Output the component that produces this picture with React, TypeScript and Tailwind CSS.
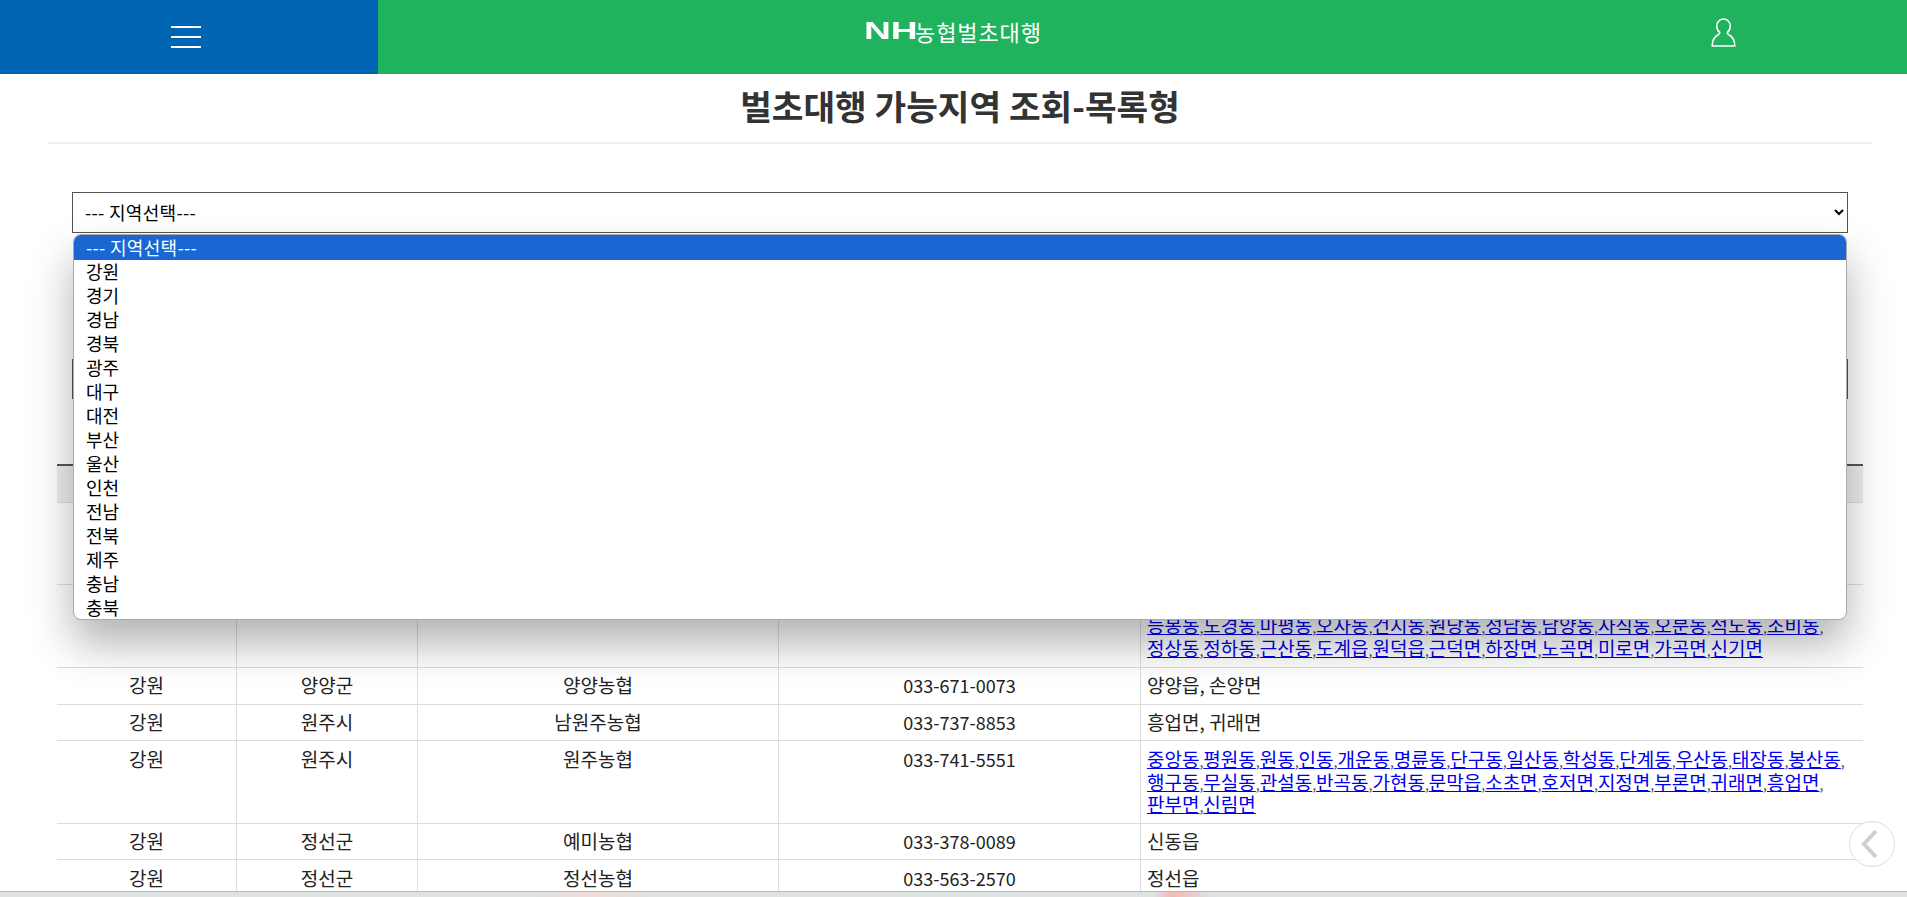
import React from 'react';

const regions = ['강원', '경기', '경남', '경북', '광주', '대구', '대전', '부산', '울산', '인천', '전남', '전북', '제주', '충남', '충북'];

interface Row {
  sido: string;
  sigun: string;
  name: string;
  tel: string;
  area?: string;
  lines?: string[][];
  height?: string;
}

const rows: Row[] = [
  { sido: '', sigun: '', name: '', tel: '', height: 'h-[82px]' },
  {
    sido: '',
    sigun: '',
    name: '',
    tel: '',
    height: 'h-[83px]',
    lines: [
      [],
      ['등봉동', '도경동', '마평동', '오사동', '건지동', '원당동', '성남동', '남양동', '사직동', '오분동', '적노동', '조비동'],
      ['정상동', '정하동', '근산동', '도계읍', '원덕읍', '근덕면', '하장면', '노곡면', '미로면', '가곡면', '신기면'],
    ],
  },
  { sido: '강원', sigun: '양양군', name: '양양농협', tel: '033-671-0073', area: '양양읍, 손양면' },
  { sido: '강원', sigun: '원주시', name: '남원주농협', tel: '033-737-8853', area: '흥업면, 귀래면' },
  {
    sido: '강원',
    sigun: '원주시',
    name: '원주농협',
    tel: '033-741-5551',
    lines: [
      ['중앙동', '평원동', '원동', '인동', '개운동', '명륜동', '단구동', '일산동', '학성동', '단계동', '우산동', '태장동', '봉산동'],
      ['행구동', '무실동', '관설동', '반곡동', '가현동', '문막읍', '소초면', '호저면', '지정면', '부론면', '귀래면', '흥업면'],
      ['판부면', '신림면'],
    ],
  },
  { sido: '강원', sigun: '정선군', name: '예미농협', tel: '033-378-0089', area: '신동읍' },
  { sido: '강원', sigun: '정선군', name: '정선농협', tel: '033-563-2570', area: '정선읍' },
];

const cell = 'border-r border-b border-[#ddd] px-2 py-[6.4px] align-top text-center';

const AreaLinks = ({ lines }: { lines: string[][] }) => (
  <>
    {lines.map((line, i) => (
      <div key={i} className="h-[22.857px] whitespace-nowrap">
        {line.map((town, j) => (
          <React.Fragment key={town}>
            <a href="#" className="text-[#0000ee] underline">{town}</a>
            {(i < lines.length - 1 || j < line.length - 1) && <span className="text-[14px] text-[#446]">,</span>}
          </React.Fragment>
        ))}
      </div>
    ))}
  </>
);

export default function App() {
  return (
    <div className="relative flex h-[897px] w-full flex-col overflow-hidden bg-white font-['Noto_Sans_CJK_KR','Noto_Sans',sans-serif] text-[#222]">
      <header className="flex h-[74px] shrink-0 bg-[#20b35d]">
        <div className="flex w-[378px] flex-col items-center justify-center gap-2 bg-[#0066b3] pr-[6px]">
          <span className="h-0.5 w-[30px] bg-white" />
          <span className="h-0.5 w-[30px] bg-white" />
          <span className="h-0.5 w-[30px] bg-white" />
        </div>
        <div className="relative flex flex-1 items-center">
          <div className="mb-3 ml-[486px] flex items-center text-white">
            <span className="inline-block w-[51px] origin-left scale-x-[1.55] font-['Liberation_Sans',sans-serif] text-[24px] leading-none font-bold">NH</span>
            <span className="text-[22px] leading-none tracking-[0.9px]">농협벌초대행</span>
          </div>
          <svg className="absolute top-[18px] left-[1333px]" width="25" height="29" viewBox="0 0 24.5 29" fill="none" stroke="#fff" strokeWidth="1.6">
            <path d="M12.25 1C8.5 1 5.5 4 5.5 8C5.5 11 6.5 13 8.5 14.5C9 15.5 8 16 6.5 17C3 19 1 22.5 1 28H23.5C23.5 22.5 21.5 19 18 17C16.5 16 15.5 15.5 16 14.5C18 13 19 11 19 8C19 4 16 1 12.25 1Z" />
          </svg>
        </div>
      </header>

      <main className="min-h-0 flex-1 overflow-hidden">
        <div className="mr-[35px] ml-[48px] flex h-[70px] items-center justify-center border-b-2 border-[#eee] pb-1">
          <h1 className="text-[34.4px] font-bold text-[#333]">벌초대행 가능지역 조회-목록형</h1>
        </div>

        <div className="mt-[48px] mr-[59px] ml-[72px] flex flex-col gap-[126px]">
          <div className="relative">
            <select className="h-[41px] w-full border border-[#555] bg-white px-2 pb-[2px] text-[18px] tracking-[0.3px] text-black">
              <option>--- 지역선택---</option>
            </select>
            <ul className="absolute top-full right-px left-px z-10 mt-px h-[386px] overflow-hidden rounded-lg border border-[#aaa] bg-white text-[18px] text-black shadow-[0_24px_44px_rgba(0,0,0,0.3)]">
              <li className="h-[25px] bg-[#1967d2] pl-[12px] leading-[24px] tracking-[0.3px] text-white">--- 지역선택---</li>
              {regions.map((region) => (
                <li key={region} className="h-[24px] pl-[12px] leading-[22.5px]">{region}</li>
              ))}
            </ul>
          </div>
          <select className="h-[40px] w-full border border-[#555] bg-white" />
        </div>

        <table className="mt-[65px] ml-[57px] w-[1806px] table-fixed border-separate border-spacing-0 text-[19px] leading-[22.857px]">
          <colgroup>
            <col className="w-[180px]" />
            <col className="w-[181px]" />
            <col className="w-[361px]" />
            <col className="w-[362px]" />
            <col />
          </colgroup>
          <thead>
            <tr className="bg-[#eee]">
              <th className="h-[39px] border-t-2 border-b border-[#ddd] border-t-[#555]" />
              <th className="border-t-2 border-b border-[#ddd] border-t-[#555]" />
              <th className="border-t-2 border-b border-[#ddd] border-t-[#555]" />
              <th className="border-t-2 border-b border-[#ddd] border-t-[#555]" />
              <th className="border-t-2 border-b border-[#ddd] border-t-[#555]" />
            </tr>
          </thead>
          <tbody>
            {rows.map((row, i) => (
              <tr key={i}>
                <td className={`${cell} ${row.height ?? ''}`}>{row.sido}</td>
                <td className={cell}>{row.sigun}</td>
                <td className={cell}>{row.name}</td>
                <td className={`${cell} text-[18px]`}>{row.tel}</td>
                <td className="border-b border-[#ddd] py-[6.4px] pl-[6px] align-top whitespace-nowrap">
                  {row.lines ? <AreaLinks lines={row.lines} /> : row.area}
                </td>
              </tr>
            ))}
          </tbody>
        </table>
      </main>

      <div className="h-[6px] shrink-0 border-t border-[#bbb] bg-[linear-gradient(90deg,#dde2e2_0%,#dde2e2_28%,#f0dcd6_31%,#dde2e2_34%,#dde2e2_60.5%,#f4b8b4_61.5%,#dde2e2_63.5%,#dde2e2_100%)]" />

      <button className="absolute top-[821px] right-[12px] flex h-[46px] w-[46px] items-center justify-center rounded-full border border-[#ddd] bg-white/70 pr-1">
        <svg className="blur-[0.5px]" width="20" height="32" viewBox="0 0 20 32" fill="none" stroke="#cfcfcf" strokeWidth="4">
          <polyline points="16,3 4,16 16,29" />
        </svg>
      </button>
    </div>
  );
}
